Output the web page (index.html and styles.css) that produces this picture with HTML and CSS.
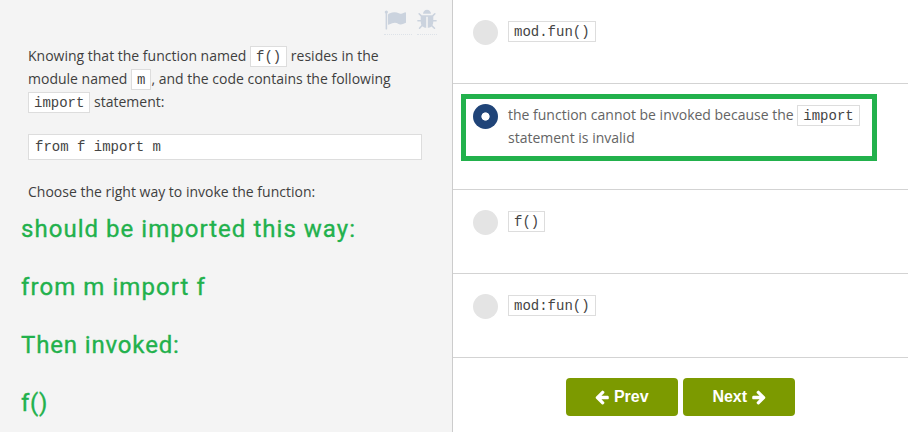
FILE: index.html
```
<!DOCTYPE html>
<html lang="en">
<head>
<meta charset="utf-8">
<title>Quiz question</title>
<link rel="stylesheet" href="styles.css">
</head>
<body>
<main class="quiz">
  <section class="question">
    <div class="tools">
      <span class="tool tool-flag"><svg viewBox="0 0 1792 1792"><path d="M320 256q0 72-64 110v1266q0 13-9.5 22.5t-22.5 9.5h-64q-13 0-22.5-9.5t-9.5-22.5v-1266q-64-38-64-110 0-53 37.5-90.5t90.5-37.5 90.5 37.5 37.5 90.5zm1472 64v763q0 25-12.5 38.5t-39.5 27.5q-215 116-369 116-61 0-123.5-22t-108.5-48-115.5-48-142.5-22q-192 0-464 146-17 9-33 9-26 0-45-19t-19-45v-742q0-32 31-55 21-14 79-43 236-120 421-120 107 0 200 29t219 88q38 19 88 19 54 0 117.5-21t110-47 88-47 54.5-21q26 0 45 19t19 45z"/></svg></span>
      <span class="tool tool-bug"><svg viewBox="0 0 1792 1792"><path d="M1696 960q0 26-19 45t-45 19h-224q0 171-67 290l208 209q19 19 19 45t-19 45q-18 19-45 19t-45-19l-198-197q-5 5-15 13t-42 28.5-65 36.5-82 29-97 13v-896h-128v896q-51 0-101.5-13.5t-87-33-66-39-43.5-32.5l-15-14-183 207q-20 21-48 21-24 0-43-16-19-18-20.5-44.5t15.5-46.5l202-227q-58-114-58-274h-224q-26 0-45-19t-19-45 19-45 45-19h224v-294l-173-173q-19-19-19-45t19-45 45-19 45 19l173 173h844l173-173q19-19 45-19t45 19 19 45-19 45l-173 173v294h224q26 0 45 19t19 45zm-480-576h-640q0-133 93.5-226.5t226.5-93.5 226.5 93.5 93.5 226.5z"/></svg></span>
    </div>
    <p class="prompt mixed">Knowing that the function named <code>f()</code> resides in the<br>module named <code>m</code>, and the code contains the following<br><code>import</code> statement:</p>
    <pre class="snippet">from f import m</pre>
    <p class="prompt">Choose the right way to invoke the function:</p>
    <div class="notes">
      <p class="note-a">should be imported this way:</p>
      <p class="note-b">from m import f</p>
      <p class="note-c">Then invoked:</p>
      <p class="note-d">f()</p>
    </div>
  </section>
  <section class="answers">
    <div class="answer"><span class="radio"></span><p class="mixed"><code>mod.fun()</code></p></div>
    <div class="answer answer-tall"><span class="radio selected"></span><p class="mixed">the function cannot be invoked because the <code>import</code><br>statement is invalid</p><span class="highlight"></span></div>
    <div class="answer"><span class="radio"></span><p class="mixed"><code>f()</code></p></div>
    <div class="answer"><span class="radio"></span><p class="mixed"><code>mod:fun()</code></p></div>
    <nav class="nav">
      <button type="button"><svg viewBox="0 0 1664 1792"><path d="M1536 896v128q0 53-32.5 90.5t-84.5 37.5h-704l293 294q38 36 38 90t-38 90l-75 76q-37 37-90 37-52 0-91-37l-651-652q-37-37-37-90 0-52 37-91l651-650q38-38 91-38 52 0 90 38l75 74q38 38 38 91t-38 91l-293 293h704q52 0 84.5 37.5t32.5 90.5z"/></svg><span>Prev</span></button>
      <button type="button"><span>Next</span><svg class="forward" viewBox="0 0 1664 1792"><path d="M1536 896v128q0 53-32.5 90.5t-84.5 37.5h-704l293 294q38 36 38 90t-38 90l-75 76q-37 37-90 37-52 0-91-37l-651-652q-37-37-37-90 0-52 37-91l651-650q38-38 91-38 52 0 90 38l75 74q38 38 38 91t-38 91l-293 293h704q52 0 84.5 37.5t32.5 90.5z"/></svg></button>
    </nav>
  </section>
</main>
</body>
</html>
```
FILE: styles.css
```
* { box-sizing: border-box; }
body {
  margin: 0;
  background: #fff;
  font: 14px/23px "Open Sans", sans-serif;
  color: #3f3f3f;
}
p, pre { margin: 0; }
.quiz {
  display: grid;
  grid-template-columns: 453px 1fr;
  height: 432px;
  overflow: hidden;
}
.question {
  background: #f4f4f4;
  border-right: 1px solid #ccc;
  padding: 9px 15px 0 28px;
}
.tools {
  display: flex;
  justify-content: flex-end;
  gap: 5px;
  height: 26px;
  margin-bottom: 10px;
}
.tool {
  display: flex;
  border-bottom: 1px dotted #dde2e8;
}
.tool-flag { width: 28px; }
.tool-bug { width: 20px; justify-content: center; }
.tool svg {
  flex: none;
  width: 22px;
  height: 22px;
  fill: #cbd3de;
}
code, .snippet {
  font: 14px/19px "Courier New", "Liberation Mono", monospace;
  color: #444;
  background: #fff;
  border: 1px solid #ddd;
}
code {
  display: inline-block;
  height: 21px;
  margin: 2px 0 0;
  padding: 1px 5px 0;
  vertical-align: top;
}
.mixed { margin: -1px 0 0; }
.prompt { white-space: nowrap; }
.snippet {
  width: 394px;
  height: 26px;
  margin: 21px 0 20px;
  padding: 3px 6px;
}
.notes {
  margin: -3px 0 0 -7px;
  font: 400 24px/58px Roboto, sans-serif;
  -webkit-text-stroke: 0.35px #22b14c;
  color: #22b14c;
  white-space: nowrap;
}
.notes p { height: 58px; }
.note-a { letter-spacing: 1.03px; }
.note-b { letter-spacing: 1.07px; }
.note-c { letter-spacing: 0.85px; }
.note-d { letter-spacing: 0.7px; }
.answers { color: #646464; }
.answer {
  position: relative;
  display: flex;
  gap: 10px;
  height: 84px;
  padding: 20px;
  border-bottom: 1px solid #d3d3d3;
}
.answer-tall { height: 106px; }
.answer p { white-space: nowrap; }
.radio {
  flex: none;
  width: 25px;
  height: 25px;
  border-radius: 50%;
  background: #e4e4e4;
}
.selected {
  background: radial-gradient(circle, #fff 3.7px, #204478 4.5px);
}
.highlight {
  position: absolute;
  left: 8px;
  top: 10px;
  width: 416px;
  height: 67px;
  border: 5px solid #22b14c;
}
.nav {
  display: flex;
  gap: 5px;
  padding: 20px 0 0 113px;
}
.nav button {
  display: flex;
  align-items: center;
  justify-content: center;
  gap: 3.5px;
  width: 112px;
  height: 38px;
  padding: 0;
  border: 0;
  border-radius: 4px;
  background: #7c9a00;
  color: #fff;
  font: bold 16px/20px "Liberation Sans", sans-serif;
}
.nav svg {
  width: 15px;
  height: 16px;
  fill: #fff;
}
.nav .forward { transform: scaleX(-1); }
```
